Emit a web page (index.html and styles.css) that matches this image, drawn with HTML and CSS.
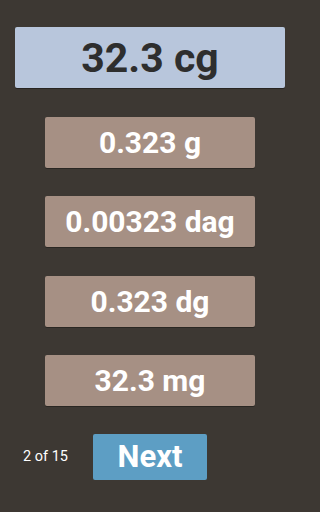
FILE: index.html
```html
<!DOCTYPE html>
<html>
<head>
<meta charset="utf-8">
<link rel="stylesheet" href="styles.css">
</head>
<body>
<div class="screen">
  <div class="question">32.3 cg</div>
  <div class="answers">
    <div class="answer">0.323 g</div>
    <div class="answer">0.00323 dag</div>
    <div class="answer">0.323 dg</div>
    <div class="answer">32.3 mg</div>
  </div>
  <div class="footer">
    <div class="progress">2 of 15</div>
    <div class="next">Next</div>
  </div>
</div>
</body>
</html>
```
FILE: styles.css
```css
html, body {
  margin: 0;
  padding: 0;
  background: #3d3833;
  font-family: Roboto, "Liberation Sans", sans-serif;
}
.screen {
  width: 300px;
  height: 512px;
  box-sizing: border-box;
  padding-top: 27px;
  display: flex;
  flex-direction: column;
  align-items: center;
}
.question {
  width: 270px;
  height: 61px;
  background: #b8c6dc;
  border-radius: 2px;
  box-shadow: 0 1px 0 rgba(0,0,0,0.35);
  color: #2e2e2e;
  font-weight: 700;
  font-size: 41px;
  display: flex;
  align-items: center;
  justify-content: center;
}
.answers {
  margin-top: 29px;
  display: flex;
  flex-direction: column;
  gap: 28.3px;
}
.answer {
  width: 210px;
  height: 51px;
  background: #a69084;
  border-radius: 2px;
  box-shadow: 0 1px 0 rgba(0,0,0,0.3);
  color: #ffffff;
  font-weight: 700;
  font-size: 30px;
  display: flex;
  align-items: center;
  justify-content: center;
}
.footer {
  align-self: stretch;
  margin-top: 28px;
  display: flex;
  align-items: center;
  padding-left: 23px;
}
.progress {
  width: 70px;
  color: #ffffff;
  font-size: 14.5px;
}
.next {
  width: 114px;
  height: 46px;
  background: #5d9ec4;
  border-radius: 2px;
  color: #ffffff;
  font-weight: 700;
  font-size: 31px;
  display: flex;
  align-items: center;
  justify-content: center;
}
```
